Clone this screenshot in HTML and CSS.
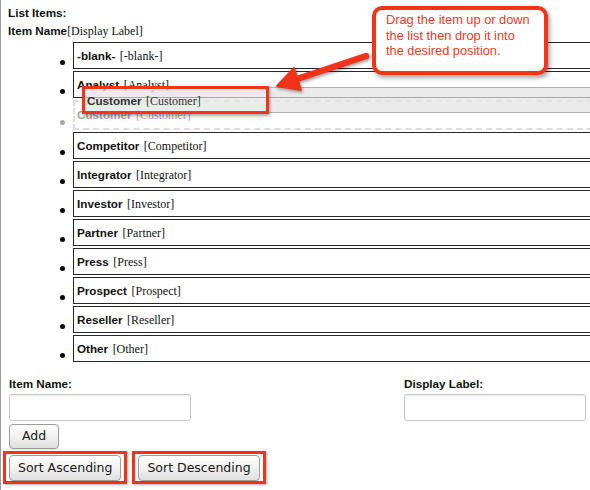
FILE: index.html
```html
<!DOCTYPE html>
<html>
<head>
<meta charset="utf-8">
<title>List Items</title>
<link rel="stylesheet" href="styles.css">
</head>
<body>
<div class="panel">
  <div class="title">List Items:</div>
  <div class="legend"><b class="nm">Item Name</b><span class="lb">[Display Label]</span></div>
  <ul class="list">
    <li class="item"><div class="box"><b class="nm">-blank-</b> <span class="lb">[-blank-]</span></div></li>
    <li class="item"><div class="box"><b class="nm">Analyst</b> <span class="lb">[Analyst]</span></div></li>
    <li class="item ghost"><div class="box"><b class="nm">Customer</b> <span class="lb">[Customer]</span></div></li>
    <li class="item"><div class="box"><b class="nm">Competitor</b> <span class="lb">[Competitor]</span></div></li>
    <li class="item"><div class="box"><b class="nm">Integrator</b> <span class="lb">[Integrator]</span></div></li>
    <li class="item"><div class="box"><b class="nm">Investor</b> <span class="lb">[Investor]</span></div></li>
    <li class="item"><div class="box"><b class="nm">Partner</b> <span class="lb">[Partner]</span></div></li>
    <li class="item"><div class="box"><b class="nm">Press</b> <span class="lb">[Press]</span></div></li>
    <li class="item"><div class="box"><b class="nm">Prospect</b> <span class="lb">[Prospect]</span></div></li>
    <li class="item"><div class="box"><b class="nm">Reseller</b> <span class="lb">[Reseller]</span></div></li>
    <li class="item"><div class="box"><b class="nm">Other</b> <span class="lb">[Other]</span></div></li>
  </ul>
  <div class="form">
    <div class="field">
      <label class="flabel">Item Name:</label>
      <input class="input" type="text">
      <button class="btn btn-add">Add</button>
    </div>
    <div class="field">
      <label class="flabel">Display Label:</label>
      <input class="input" type="text">
    </div>
  </div>
  <div class="sorts">
    <span class="mark"><button class="btn btn-sort">Sort Ascending</button></span>
    <span class="mark"><button class="btn btn-sort">Sort Descending</button></span>
  </div>
</div>

<div class="helper"><b class="nm">Customer</b> <span class="lb">[Customer]</span></div>
<div class="hl"></div>
<svg class="arrow" width="590" height="140" viewBox="0 0 590 140">
  <line x1="366" y1="56" x2="294" y2="80" stroke="#f2321a" stroke-width="6.5" stroke-linecap="round"/>
  <polygon points="277,86 294,68 301,90" fill="#f2321a" stroke="#f2321a" stroke-width="2" stroke-linejoin="round"/>
</svg>
<div class="callout">Drag the item up or down<br>the list then drop it into<br>the desired position.</div>
</body>
</html>
```
FILE: styles.css
```css
html, body {
  margin: 0;
  padding: 0;
  overflow: hidden;
  background: #fff;
}
body {
  position: relative;
  width: 590px;
  height: 490px;
  font-family: "Liberation Sans", Arial, sans-serif;
  color: #111;
}
.panel {
  border-left: 1px solid #9c9c9c;
  height: 490px;
  box-sizing: border-box;
  padding: 4px 0 0 7px;
}
.title, .legend {
  line-height: 17px;
  height: 17px;
  white-space: nowrap;
}
.title {
  font-weight: bold;
  font-size: 11.7px;
}
.nm {
  font-family: "Liberation Sans", Arial, sans-serif;
  font-weight: bold;
  font-size: 11.7px;
}
.lb {
  font-family: "Liberation Serif", "Times New Roman", serif;
  font-size: 12px;
}
.list {
  list-style: none;
  margin: 4px 0 0 0;
  padding: 0;
}
.item {
  display: flex;
  align-items: flex-start;
  margin-bottom: 2px;
}
.item::before {
  content: "";
  flex: none;
  width: 5px;
  height: 5px;
  border-radius: 50%;
  background: #000;
  margin: 18px 8px 0 52px;
}
.box {
  flex: none;
  width: 540px;
  height: 27px;
  box-sizing: border-box;
  border: 1px solid #262626;
  padding: 4px 0 0 3px;
  line-height: 15px;
  white-space: nowrap;
}
.ghost::before {
  background: #a8a8a8;
  margin-top: 20px;
}
.ghost .box {
  height: 30px;
  border: 2px dashed #dcdcdc;
  padding-left: 2px;
  color: #a6a6a6;
}
.form {
  display: flex;
  justify-content: space-between;
  margin-top: 14px;
  padding: 0 4px 0 1px;
}
.field {
  display: flex;
  flex-direction: column;
  align-items: flex-start;
}
.flabel {
  font-weight: bold;
  font-size: 11.7px;
  line-height: 15px;
  height: 15px;
}
.input {
  margin: 3px 0 0 0;
  width: 182px;
  height: 27px;
  box-sizing: border-box;
  border: 1px solid #c6c6c6;
  border-radius: 3px;
  background: #fff;
  padding: 0 4px;
  box-shadow: inset 0 1px 1px rgba(0,0,0,0.06);
}
.btn {
  font-family: "DejaVu Sans", "Lucida Grande", sans-serif;
  font-size: 12.5px;
  color: #1a1a1a;
  border: 1px solid #9d9d9d;
  border-radius: 4px;
  background: linear-gradient(#fefefe, #f1f1f1 50%, #e0e0e0);
  box-shadow: 0 1px 1px rgba(0,0,0,0.12);
  margin: 0;
  box-sizing: border-box;
  line-height: 1;
}
.btn-add {
  margin-top: 3px;
  height: 25px;
  padding: 0 12px;
}
.sorts {
  display: flex;
  gap: 5px;
  margin: 2px 0 0 -5px;
}
.mark {
  display: inline-flex;
  border: 3px solid #f33418;
  padding: 1px 3px 0 3px;
  box-shadow: 1px 1px 2px rgba(0,0,0,0.3);
}
.btn-sort {
  height: 26px;
  padding: 0 8px;
}
.helper {
  position: absolute;
  left: 83px;
  top: 87px;
  width: 520px;
  height: 26px;
  box-sizing: border-box;
  border: 1px solid rgba(120,120,120,0.5);
  background: rgba(226,226,226,0.7);
  padding: 4px 0 0 3px;
  line-height: 15px;
  color: #333;
  white-space: nowrap;
}
.hl {
  position: absolute;
  left: 82px;
  top: 86px;
  width: 187px;
  height: 28px;
  box-sizing: border-box;
  border: 3px solid #f33418;
  box-shadow: 1px 2px 3px rgba(0,0,0,0.35);
}
.arrow {
  position: absolute;
  left: 0;
  top: 0;
  filter: drop-shadow(1px 2px 1.5px rgba(0,0,0,0.35));
}
.callout {
  position: absolute;
  left: 372px;
  top: 6px;
  width: 176px;
  height: 69px;
  box-sizing: border-box;
  border: 4px solid #f33418;
  border-radius: 10px;
  background: #fff;
  box-shadow: 2px 3px 4px rgba(0,0,0,0.35);
  padding: 2px 0 0 10px;
  font-size: 12.8px;
  line-height: 15.5px;
  color: #f03a1e;
  white-space: nowrap;
}
```
